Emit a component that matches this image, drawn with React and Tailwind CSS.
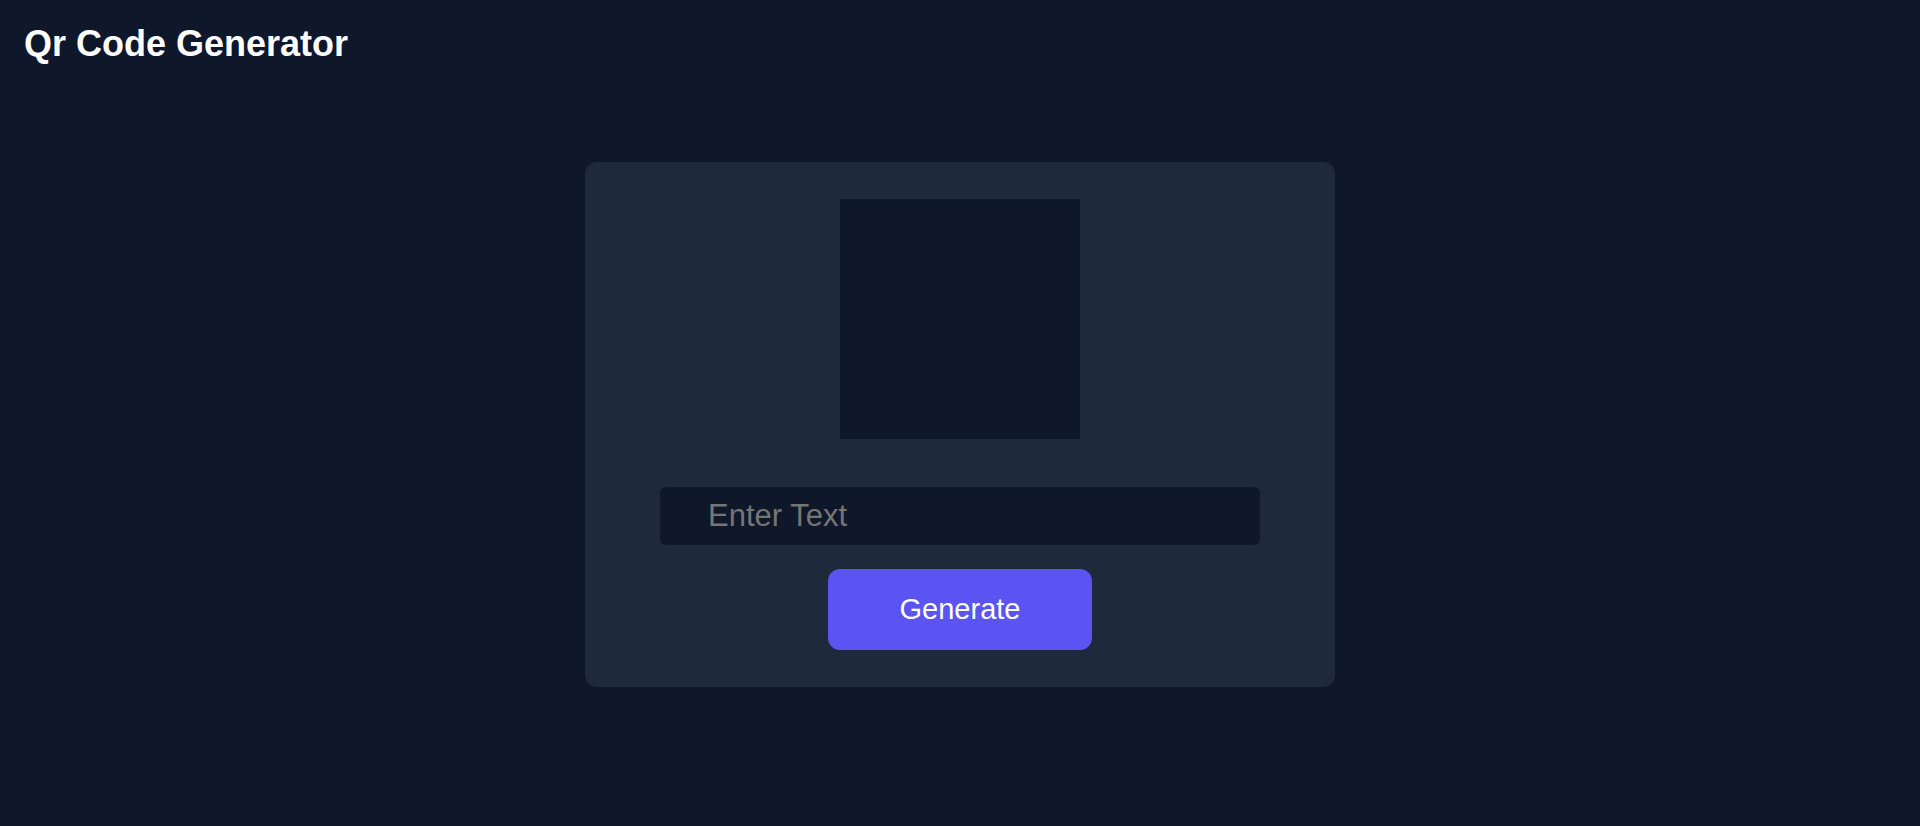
import { useState } from 'react';

export default function App() {
  const [text, setText] = useState('');

  return (
    <div className="min-h-screen bg-[#0f172a] font-['Liberation_Sans',Arial,sans-serif] text-white">
      <header className="px-6 pt-[24px]">
        <h1 className="text-[36px] font-bold leading-[40px]">Qr Code Generator</h1>
      </header>

      <main className="flex justify-center pt-[98px]">
        <div className="flex w-[750px] flex-col items-center rounded-xl bg-[#1e293b] pt-[37px] pb-[37px]">
          <div className="h-[240px] w-[240px] bg-[#0f172a]" />

          <input
            type="text"
            value={text}
            onChange={(event) => setText(event.target.value)}
            placeholder="Enter Text"
            className="mt-12 h-[58px] w-[600px] rounded-md bg-[#0f172a] pl-12 text-[31px] text-white outline-none placeholder:text-[#757575]"
          />

          <button
            type="button"
            className="mt-6 h-[81px] w-[264px] rounded-xl bg-[#5b54f2] text-[29px] text-white"
          >
            Generate
          </button>
        </div>
      </main>
    </div>
  );
}
